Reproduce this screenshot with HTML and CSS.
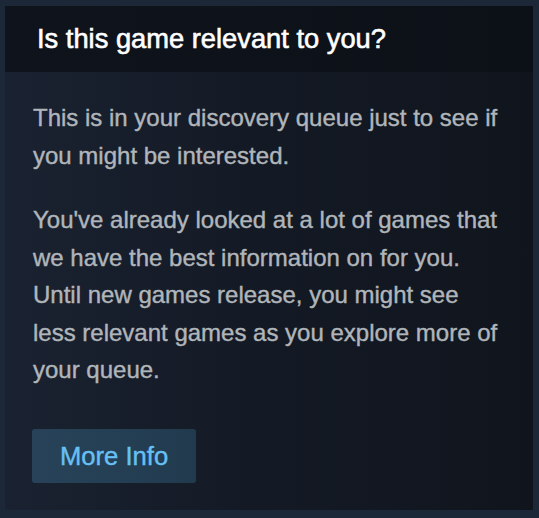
FILE: index.html
```html
<!DOCTYPE html>
<html>
<head>
<meta charset="utf-8">
<link rel="stylesheet" href="styles.css">
</head>
<body>
<div class="panel">
  <div class="panel-header">Is this game relevant to you?</div>
  <div class="panel-body">
    <p class="text">This is in your discovery queue just to see if you might be interested.</p>
    <p class="text">You've already looked at a lot of games that we have the best information on for you. Until new games release, you might see less relevant games as you explore more of your queue.</p>
    <div class="btn">More Info</div>
  </div>
</div>
</body>
</html>
```
FILE: styles.css
```css
html, body {
  margin: 0;
  padding: 0;
}
body {
  background: #1c2837;
  width: 539px;
  height: 518px;
  padding: 6px 6px 8px 5px;
  box-sizing: border-box;
  font-family: "Liberation Sans", Arial, sans-serif;
}
.panel {
  width: 528px;
  height: 504px;
  background: linear-gradient(90deg, #1a2231 0%, #141a25 45%, #10151d 100%);
  display: flex;
  flex-direction: column;
}
.panel-header {
  height: 66px;
  box-sizing: border-box;
  padding: 17px 0 0 32px;
  background: linear-gradient(90deg, #0f141c 0%, #0c1017 100%);
  color: #ffffff;
  font-size: 27.3px;
  line-height: 32px;
  -webkit-text-stroke: 0.6px #ffffff;
}
.panel-body {
  padding: 27px 28px 0 28px;
}
.text {
  margin: 0 0 27px 0;
  color: #b0b5ba;
  font-size: 24px;
  line-height: 37.5px;
  -webkit-text-stroke: 0.4px #b0b5ba;
}
.text:last-of-type {
  margin-bottom: 40px;
}
.btn {
  width: 164px;
  height: 54px;
  box-sizing: border-box;
  margin-left: -1px;
  padding-left: 28px;
  border-radius: 3px;
  background: linear-gradient(90deg, #284359 0%, #213a4e 100%);
  color: #66c0f4;
  font-size: 25.6px;
  line-height: 54px;
  -webkit-text-stroke: 0.4px #66c0f4;
}
```
